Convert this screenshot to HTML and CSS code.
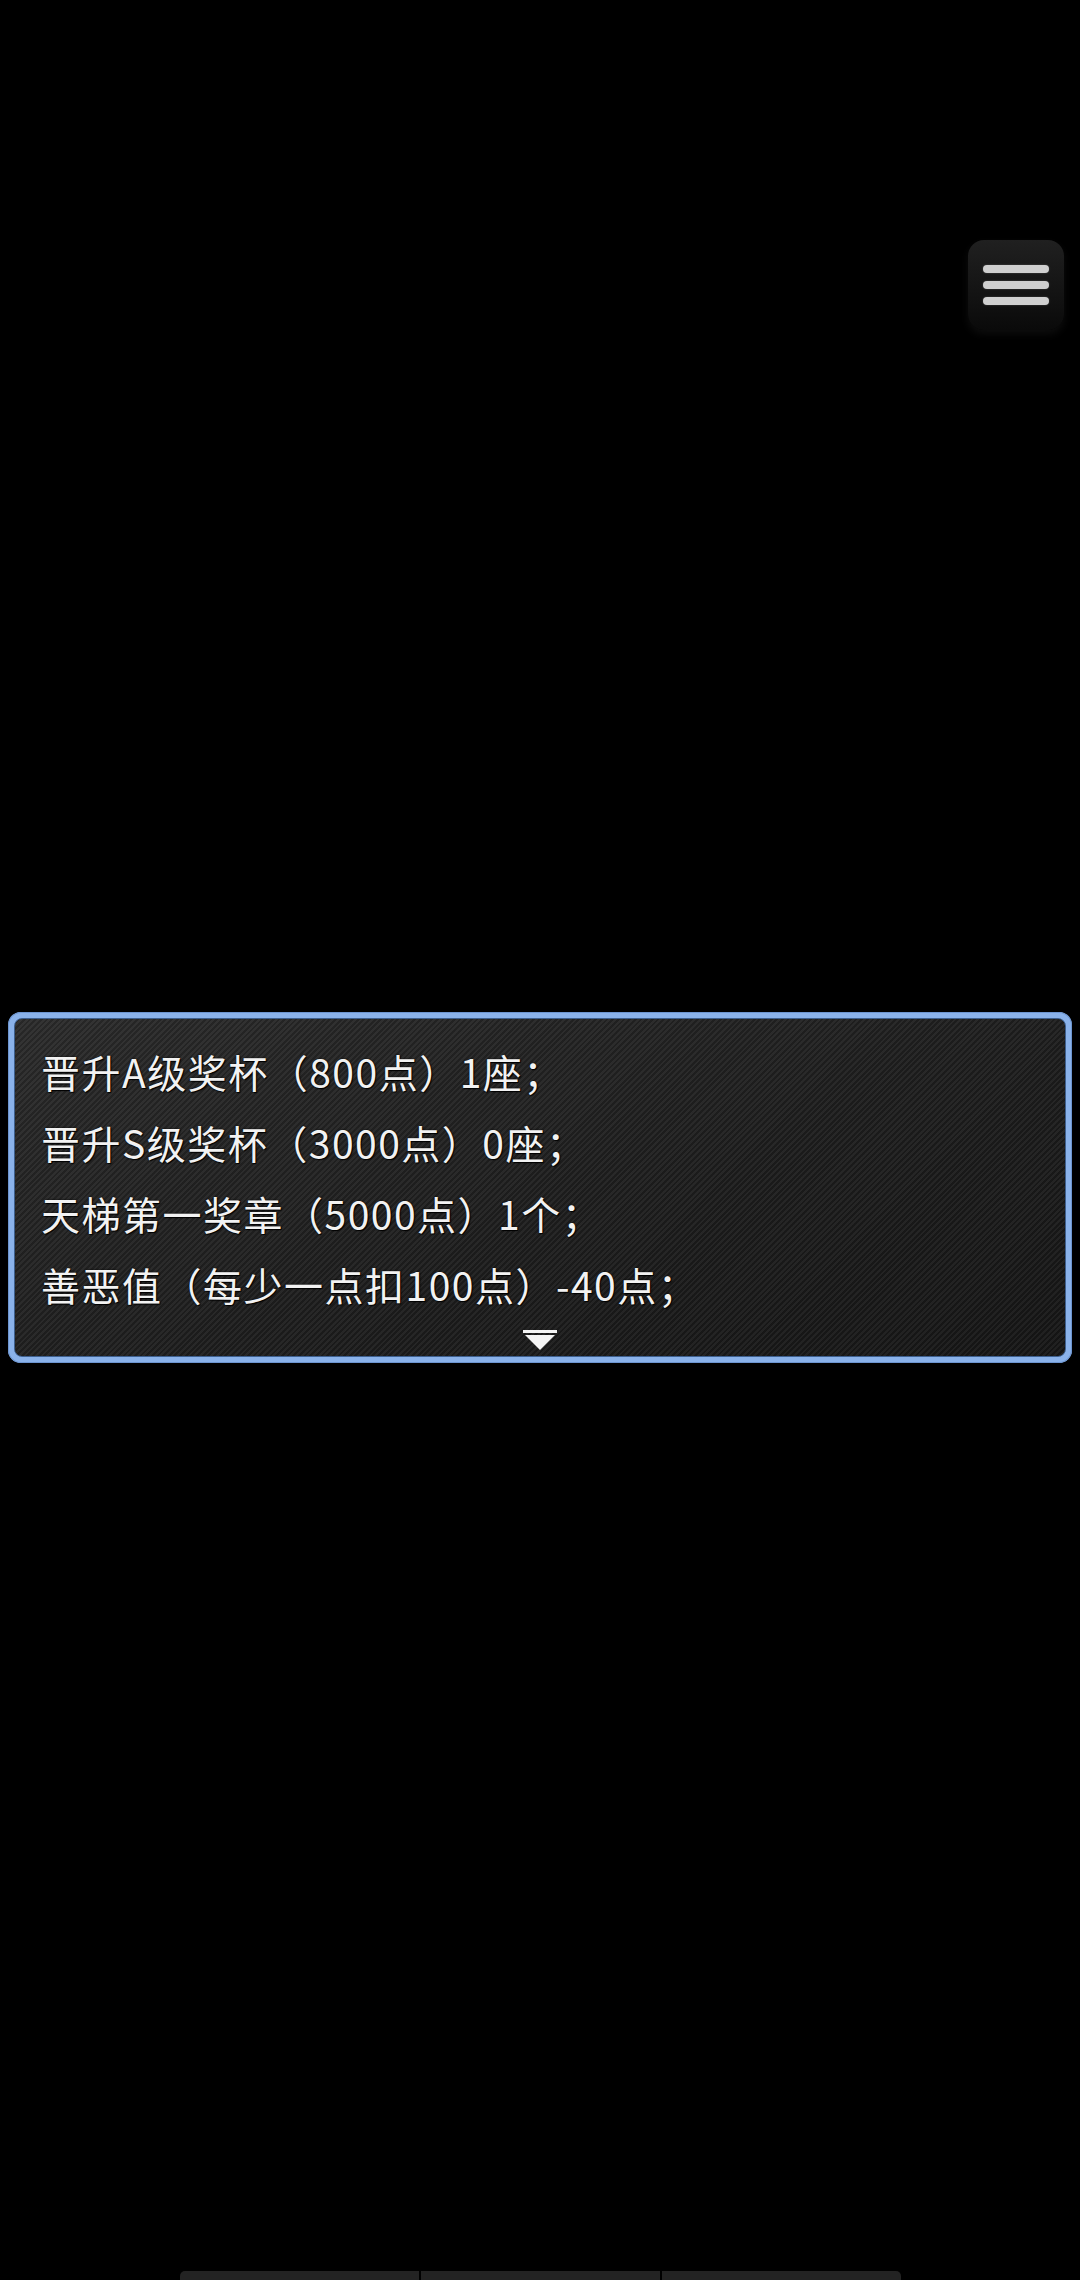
FILE: index.html
```html
<!DOCTYPE html>
<html lang="zh">
<head>
<meta charset="utf-8">
<link rel="stylesheet" href="styles.css">
</head>
<body>
<div class="page">
  <div class="topbar">
    <div class="menu-btn">
      <span class="bar"></span>
      <span class="bar"></span>
      <span class="bar"></span>
    </div>
  </div>
  <div class="dialog">
    <div class="dialog-inner">
      <p class="line">晋升A级奖杯（800点）1座；</p>
      <p class="line">晋升S级奖杯（3000点）0座；</p>
      <p class="line">天梯第一奖章（5000点）1个；</p>
      <p class="line">善恶值（每少一点扣100点）-40点；</p>
      <div class="more">
        <span class="more-bar"></span>
        <span class="more-tri"></span>
      </div>
    </div>
  </div>
  <div class="navbar">
    <span class="seg"></span>
    <span class="seg"></span>
    <span class="seg"></span>
  </div>
</div>
</body>
</html>
```
FILE: styles.css
```css
html, body {
  margin: 0;
  padding: 0;
  background: #000;
}
.page {
  width: 1080px;
  height: 2280px;
  display: flex;
  flex-direction: column;
  overflow: hidden;
}
.topbar {
  display: flex;
  justify-content: flex-end;
  padding: 240px 16px 0 0;
}
.menu-btn {
  width: 96px;
  height: 90px;
  border-radius: 16px;
  background: linear-gradient(#202020, #111 70%, #0a0a0a);
  box-shadow: 0 4px 8px rgba(40,40,40,0.35);
  display: flex;
  flex-direction: column;
  align-items: center;
  justify-content: center;
  gap: 8px;
}
.menu-btn .bar {
  display: block;
  width: 66px;
  height: 8px;
  border-radius: 4px;
  background: #cfcfcf;
  box-shadow: 0 0 2px rgba(255,255,255,0.25);
}
.dialog {
  margin: 682px 8px 0 8px;
  height: 351px;
  box-sizing: border-box;
  border-radius: 13px;
  background: #8ab2ea;
  padding: 6px;
  box-shadow: inset 0 0 0 1px #6d95d0;
}
.dialog-inner {
  height: 100%;
  box-sizing: border-box;
  border-radius: 8px;
  border: 1px solid #3d5f8e;
  background:
    repeating-linear-gradient(135deg, rgba(255,255,255,0.045) 0 2px, rgba(0,0,0,0.1) 2px 4px),
    linear-gradient(160deg, #2b2b2b, #1e1e1e 55%, #161616);
  padding: 17px 0 0 26px;
  display: flex;
  flex-direction: column;
}
.line {
  margin: 0;
  height: 71px;
  line-height: 71px;
  font-family: "Noto Sans CJK SC", "Noto Sans", sans-serif;
  font-size: 39px;
  letter-spacing: 1.5px;
  color: #f2f2f2;
  text-shadow: 0 0 2px #000, 1px 1px 1px #000;
  white-space: nowrap;
}
.more {
  display: flex;
  flex-direction: column;
  align-items: center;
  margin-left: -26px;
  padding-top: 10px;
}
.more-bar {
  display: block;
  width: 34px;
  height: 3px;
  background: #f4f4f4;
}
.more-tri {
  display: block;
  width: 0;
  height: 0;
  margin-top: 2px;
  border-left: 15px solid transparent;
  border-right: 15px solid transparent;
  border-top: 15px solid #f4f4f4;
}
.navbar {
  margin-top: auto;
  display: flex;
  justify-content: center;
  gap: 2px;
  height: 9px;
}
.seg {
  display: block;
  width: 239px;
  height: 9px;
  background: #232323;
}
.seg:first-child { border-top-left-radius: 5px; }
.seg:last-child { border-top-right-radius: 5px; }
```
